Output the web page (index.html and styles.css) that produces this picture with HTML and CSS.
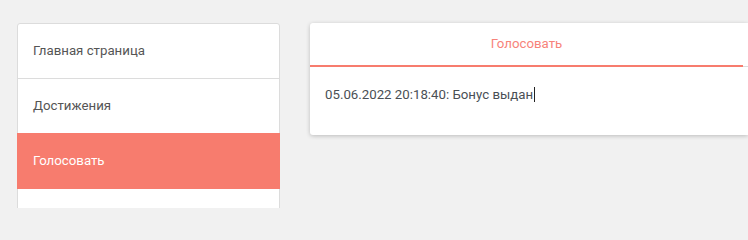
FILE: index.html
```html
<!DOCTYPE html>
<html lang="ru">
<head>
<meta charset="utf-8">
<title>Голосовать</title>
<link rel="stylesheet" href="styles.css">
</head>
<body>
<div class="page">
  <nav class="menu">
    <a class="menu-item">Главная страница</a>
    <a class="menu-item">Достижения</a>
    <a class="menu-item active">Голосовать</a>
    <a class="menu-item"></a>
  </nav>
  <section class="card">
    <div class="tabs">
      <div class="tab active">Голосовать</div>
    </div>
    <div class="card-body">
      <span class="log">05.06.2022 20:18:40: Бонус выдан</span><span class="caret"></span>
    </div>
  </section>
</div>
</body>
</html>
```
FILE: styles.css
```css
html, body {
  margin: 0;
  padding: 0;
  background: #f1f1f1;
  overflow: hidden;
}
body {
  font-family: Roboto, "Noto Sans", sans-serif;
  font-size: 13.25px;
  color: #444;
}
.page {
  display: flex;
  align-items: flex-start;
  gap: 30px;
  padding: 23px 0 0 17px;
  width: 748px;
  height: 208px;
  box-sizing: border-box;
  overflow: hidden;
}
.menu {
  display: flex;
  flex-direction: column;
  width: 263px;
  flex: none;
}
.menu-item {
  display: block;
  height: 18px;
  line-height: 18px;
  padding: 18px 15px;
  background: #fff;
  border: 1px solid #dcdcdc;
  margin-bottom: -1px;
  color: #555;
}
.menu-item:first-child {
  border-top-left-radius: 3px;
  border-top-right-radius: 3px;
}
.menu-item.active {
  background: #f77c6e;
  border-color: #f77c6e;
  color: #fff;
  position: relative;
}
.card {
  flex: 1;
  min-width: 0;
  background: #fff;
  border-radius: 3px 0 0 3px;
  box-shadow: 0 1px 4px rgba(0,0,0,0.22);
}
.tabs {
  display: flex;
  border-bottom: 1px solid #dcdcdc;
}
.tab {
  width: 433px;
  height: 42px;
  line-height: 42px;
  text-align: center;
  color: #f7837a;
  border-bottom: 2px solid #f77c6e;
  margin-bottom: -1px;
}
.card-body {
  display: flex;
  align-items: center;
  padding: 18px 15px 32px;
  height: 18px;
  color: #4a4f55;
}
.caret {
  display: inline-block;
  width: 1px;
  height: 15px;
  background: #222;
  margin-left: 1px;
}
```
